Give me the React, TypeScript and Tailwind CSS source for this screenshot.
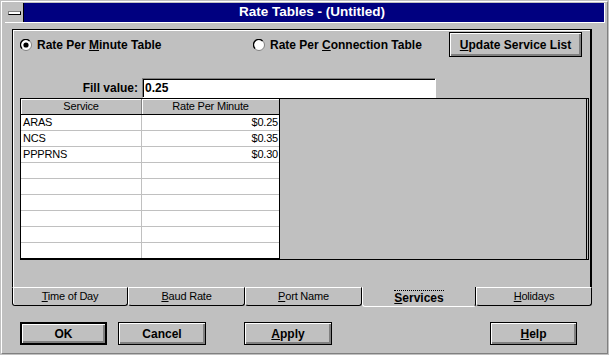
import React from "react";

const rows = [
  { service: "ARAS", rate: "$0.25" },
  { service: "NCS", rate: "$0.35" },
  { service: "PPPRNS", rate: "$0.30" },
  { service: "", rate: "" },
  { service: "", rate: "" },
  { service: "", rate: "" },
  { service: "", rate: "" },
  { service: "", rate: "" },
  { service: "", rate: "" },
];

function Radio({ checked }: { checked?: boolean }) {
  return (
    <svg width="12" height="12" viewBox="0 0 12 12" className="shrink-0">
      <circle cx="6" cy="6" r="5.5" fill="#fff" stroke="#808080" />
      <path d="M2 9.5 A4.6 4.6 0 0 1 9.5 2" fill="none" stroke="#000" strokeWidth="1.3" />
      {checked && <circle cx="6" cy="6" r="2.6" fill="#000" />}
    </svg>
  );
}

function Btn({ children, className }: { children: React.ReactNode; className: string }) {
  return (
    <div
      className={`h-[23px] bg-[#c0c0c0] border-black flex items-center justify-center text-[12px] font-bold text-black shadow-[inset_1px_1px_0_#fff,inset_-1px_-1px_0_#808080,inset_-2px_-2px_0_#808080] ${className}`}
    >
      {children}
    </div>
  );
}

const tabs = [
  { key: "T", rest: "ime of Day", w: "w-[116px]" },
  { key: "B", rest: "aud Rate", w: "w-[117px]" },
  { key: "P", rest: "ort Name", w: "w-[117px]" },
  { key: "S", rest: "ervices", w: "w-[114px]", active: true },
  { key: "H", rest: "olidays", w: "w-[116px]" },
];

export default function App() {
  return (
    <div className="w-[609px] h-[355px] bg-[#c0c0c0] p-px font-['Liberation_Sans',Arial,sans-serif] text-black overflow-hidden">
      <div className="h-full border border-t-white border-l-white border-r-[#808080] border-b-[#808080] pl-[3px] pt-px">
        {/* title bar */}
        <div className="flex h-[20px] w-[600px] border-b border-r border-white">
          <div className="w-[19px] bg-[#c0c0c0] border-r border-black flex items-center justify-center">
            <div className="w-[13px] h-[4px] bg-white border border-black border-l-[#808080] border-t-[#808080]" />
          </div>
          <div className="flex-1 bg-[#000080] text-white text-[13.5px] font-bold flex items-center justify-center pr-[4px]">
            Rate Tables - (Untitled)
          </div>
        </div>

        {/* tab page */}
        <div className="ml-[7px] mt-[6px] w-[580px] h-[258px] border-t border-l border-black border-r-2 border-r-black shadow-[inset_1px_1px_0_#fff]">
          <div className="mt-[2px] h-[25px] flex items-center pl-[7px]">
            <div className="w-[233px] flex items-center gap-[5px] text-[12px] font-bold">
              <Radio checked />
              <span>
                Rate Per <u>M</u>inute Table
              </span>
            </div>
            <div className="w-[196px] flex items-center gap-[5px] text-[12px] font-bold">
              <Radio />
              <span>
                Rate Per <u>C</u>onnection Table
              </span>
            </div>
            <Btn className="w-[133px] h-[25px] border">
              <span>
                <u>U</u>pdate Service List
              </span>
            </Btn>
          </div>

          <div className="mt-[21px] flex h-[20px]">
            <div className="w-[125px] text-right text-[12px] font-bold leading-[20px]">Fill value:</div>
            <div className="ml-[4px] w-[294px] h-[20px] bg-white border border-t-[#808080] border-l-[#808080] border-r-white border-b-white shadow-[inset_1px_1px_0_#000] pl-[2px] text-[12px] font-bold leading-[19px]">
              0.25
            </div>
          </div>

          <div className="ml-[7px] w-[569px] border-t border-b border-black border-r-[3px] border-r-black border-double">
            <div className="w-[260px] border-l border-r border-b border-black bg-white text-[11px] tracking-[-0.2px]">
              <div className="flex h-[16px] border-b border-black bg-[#c0c0c0] leading-[15px]">
                <div className="w-[121px] border-r border-[#808080] text-center shadow-[inset_1px_1px_0_#fff]">Service</div>
                <div className="flex-1 text-center shadow-[inset_1px_1px_0_#fff]">Rate Per Minute</div>
              </div>
              {rows.map((r, i) => (
                <div
                  key={i}
                  className={`flex leading-[15px] ${i < rows.length - 1 ? "h-[16px] border-b border-[#c0c0c0]" : "h-[15px]"}`}
                >
                  <div className="w-[121px] border-r border-[#c0c0c0] pl-[2px]">{r.service}</div>
                  <div className="flex-1 text-right pr-px">{r.rate}</div>
                </div>
              ))}
            </div>
          </div>
        </div>

        {/* tabs */}
        <div className="ml-[7px] flex items-start h-[20px]">
          {tabs.map((t, i) =>
            t.active ? (
              <div
                key={t.key}
                className={`${t.w} h-[20px] pt-px border-l border-l-white border-r border-r-black border-b border-b-white rounded-b-[3px] flex items-center justify-center text-[12px] font-bold`}
              >
                <span className="border-t border-dotted border-black leading-[12px] pt-px">
                  <u>{t.key}</u>
                  {t.rest}
                </span>
              </div>
            ) : (
              <div
                key={t.key}
                className={`${t.w} h-[19px] border-t border-t-white border-r border-r-black border-b border-b-black rounded-b-[3px] flex items-center justify-center text-[11px] tracking-[-0.2px] ${
                  i === 0 ? "border-l border-l-black shadow-[inset_1px_0_0_#fff]" : "border-l border-l-white"
                }`}
              >
                <span>
                  <u>{t.key}</u>
                  {t.rest}
                </span>
              </div>
            )
          )}
        </div>

        {/* buttons */}
        <div className="mt-[15px] flex">
          <Btn className="ml-[15px] w-[87px] border-2">OK</Btn>
          <Btn className="ml-[11px] w-[88px] border">Cancel</Btn>
          <Btn className="ml-[38px] w-[88px] border">
            <span>
              <u>A</u>pply
            </span>
          </Btn>
          <Btn className="ml-[158px] w-[87px] border">
            <span>
              <u>H</u>elp
            </span>
          </Btn>
        </div>
      </div>
    </div>
  );
}
